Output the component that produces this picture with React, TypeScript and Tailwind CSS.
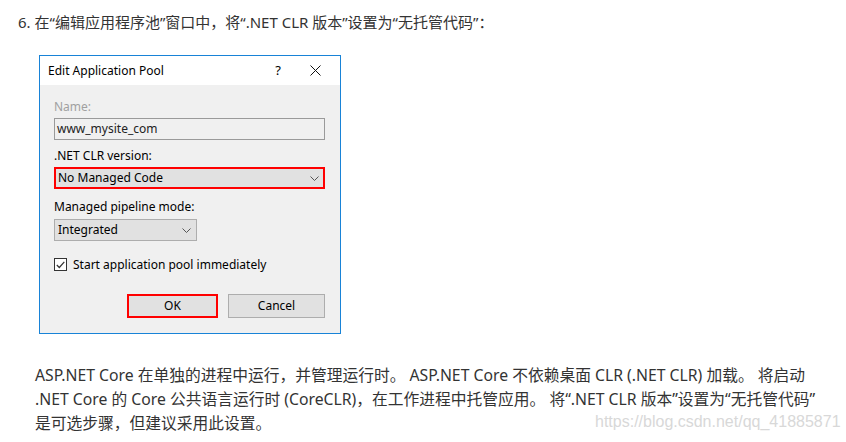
import React from "react";

const cjk = { fontFamily: '"Noto Sans", "Noto Sans CJK SC", sans-serif' };
const ui = { fontFamily: '"Noto Sans", "Open Sans", sans-serif' };

function Chevron() {
  return (
    <svg width="9" height="5" viewBox="0 0 9 5" className="shrink-0">
      <path d="M0.5 0.5 L4.5 4.5 L8.5 0.5" fill="none" stroke="#555" strokeWidth="1" />
    </svg>
  );
}

export default function App() {
  return (
    <div className="relative w-[846px] h-[442px] bg-white overflow-hidden text-[#333]" style={cjk}>
      <div className="pl-[18px] pt-[10px] text-[15px] leading-[24px] whitespace-nowrap">
        6. 在“编辑应用程序池”窗口中，将“.NET CLR 版本”设置为“无托管代码”：
      </div>

      <div className="ml-[39px] mt-[21px] w-[302px] border border-[#1883d7] bg-[#f0f0f0] text-[12px] text-black" style={ui}>
        <div className="h-[29px] bg-white flex items-center pl-[8px]">
          <span className="leading-[16px]">Edit Application Pool</span>
          <span className="ml-auto mr-[29px] text-[13px]">?</span>
          <svg width="11" height="11" viewBox="0 0 11 11" className="mr-[19px]">
            <path d="M0.5 0.5 L10.5 10.5 M10.5 0.5 L0.5 10.5" stroke="#111" strokeWidth="1" />
          </svg>
        </div>
        <div className="pl-[14px] pr-[15px] pt-[14px] pb-[15px] flex flex-col">
          <div className="leading-[16px] text-[#a0a0a0]">Name:</div>
          <div className="mt-[3px] h-[22px] border border-[#9a9a9a] bg-[#f0f0f0] flex items-center pl-[2px] text-[#222]">
            www_mysite_com
          </div>
          <div className="mt-[8px] leading-[16px]">.NET CLR version:</div>
          <div className="mt-[3px] h-[22px] border-2 border-[#ff0000] bg-[#e1e1e1] flex items-center pl-[2px] pr-[4px]">
            <span>No Managed Code</span>
            <span className="ml-auto"><Chevron /></span>
          </div>
          <div className="mt-[10px] leading-[16px]">Managed pipeline mode:</div>
          <div className="mt-[4px] h-[22px] w-[143px] border border-[#adadad] bg-[#e1e1e1] flex items-center pl-[3px] pr-[5px]">
            <span>Integrated</span>
            <span className="ml-auto"><Chevron /></span>
          </div>
          <div className="mt-[17px] h-[13px] flex items-center">
            <div className="w-[13px] h-[13px] border border-[#333] bg-white flex items-center justify-center">
              <svg width="9" height="8" viewBox="0 0 9 8">
                <path d="M0.8 4 L3.3 6.5 L8.3 0.8" fill="none" stroke="#333" strokeWidth="1.2" />
              </svg>
            </div>
            <span className="ml-[6px]">Start application pool immediately</span>
          </div>
          <div className="mt-[23px] flex justify-end gap-[10px]">
            <div className="w-[91px] h-[24px] border-2 border-[#ff0000] bg-[#e1e1e1] flex items-center justify-center">OK</div>
            <div className="w-[97px] h-[24px] border border-[#adadad] bg-[#e1e1e1] flex items-center justify-center">Cancel</div>
          </div>
        </div>
      </div>

      <div className="pl-[35px] mt-[29px] text-[15.75px] leading-[24px] whitespace-nowrap">
        <div>ASP.NET Core 在单独的进程中运行，并管理运行时。 ASP.NET Core 不依赖桌面 CLR (.NET CLR) 加载。 将启动</div>
        <div>.NET Core 的 Core 公共语言运行时 (CoreCLR)，在工作进程中托管应用。 将“.NET CLR 版本”设置为“无托管代码”</div>
        <div>是可选步骤，但建议采用此设置。</div>
      </div>

      <div
        className="absolute left-[595px] top-[412px] text-[16px] leading-[20px] text-[#d8d8d8] whitespace-nowrap"
        style={{ fontFamily: '"Liberation Sans", Arial, sans-serif' }}
      >
        https://blog.csdn.net/qq_41885871
      </div>
    </div>
  );
}
